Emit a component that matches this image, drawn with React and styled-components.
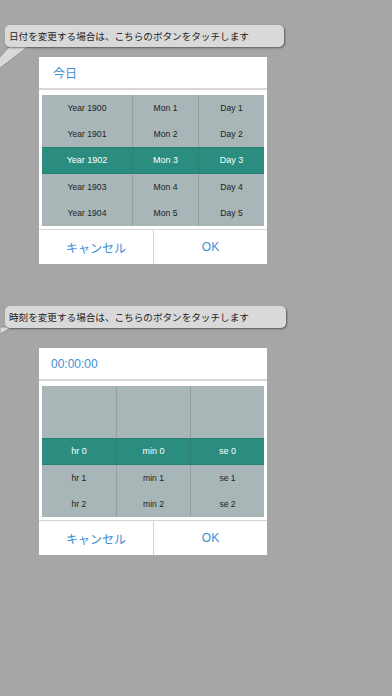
import React from "react";
import styled, { createGlobalStyle } from "styled-components";

const Global = createGlobalStyle`
  html, body { margin: 0; padding: 0; background: #a6a6a6; }
  body { font-family: "Liberation Sans", "Noto Sans CJK JP", sans-serif; }
`;

const Screen = styled.div`
  width: 392px;
  height: 696px;
  background: #a6a6a6;
  overflow: hidden;
  display: flex;
  flex-direction: column;
  align-items: flex-start;
  padding-top: 25px;
  box-sizing: border-box;
`;

const BubbleWrap = styled.div`
  position: relative;
  margin-left: 5px;
  margin-top: ${(p) => p.$top}px;
  width: ${(p) => p.$width}px;
`;

const Bubble = styled.div`
  position: relative;
  z-index: 1;
  height: 22px;
  background: #d9d9d9;
  border-radius: 5px;
  box-shadow: 1px 1px 2px rgba(0, 0, 0, 0.45);
  display: flex;
  align-items: center;
  padding-left: 4px;
  font-family: "Noto Sans CJK JP", sans-serif;
  font-size: 9.6px;
  color: #1e1e1e;
  white-space: nowrap;
`;

const Tail = styled.svg`
  position: absolute;
  left: -5px;
  top: 18px;
  z-index: 0;
  overflow: visible;
`;

const Dialog = styled.div`
  margin-left: 39px;
  margin-top: ${(p) => p.$top}px;
  width: 228px;
  background: #ffffff;
  display: flex;
  flex-direction: column;
`;

const Header = styled.div`
  height: 31px;
  border-bottom: 2px solid #d8d8d8;
  display: flex;
  align-items: center;
  padding-left: ${(p) => p.$pad}px;
  color: #3d8ed6;
  font-family: "Liberation Sans", "Noto Sans CJK JP", sans-serif;
  font-size: 12px;
`;

const Body = styled.div`
  padding: 5px 3px 3px 3px;
`;

const Picker = styled.div`
  display: grid;
  grid-template-columns: ${(p) => p.$cols};
  background: #a8b6b8;
  height: 131px;
`;

const Column = styled.div`
  display: flex;
  flex-direction: column;
`;

const Cell = styled.div`
  height: 26.2px;
  display: flex;
  align-items: center;
  justify-content: center;
  box-sizing: border-box;
  border-left: ${(p) => (p.$first ? "none" : "1px solid rgba(60, 80, 82, 0.22)")};
  background: ${(p) => (p.$selected ? "#2a8d7f" : "transparent")};
  color: ${(p) => (p.$selected ? "#ffffff" : "#222222")};
  font-size: ${(p) => (p.$selected ? "9px" : "8.6px")};
  font-family: "Liberation Sans", sans-serif;
  box-shadow: ${(p) =>
    p.$selected ? "inset 0 1px 0 rgba(0,0,0,0.08), inset 0 -1px 0 rgba(0,0,0,0.08)" : "none"};
`;

const Buttons = styled.div`
  display: grid;
  grid-template-columns: 114px 114px;
  border-top: 1px solid #d4d4d4;
  height: 34px;
`;

const Button = styled.div`
  display: flex;
  align-items: center;
  justify-content: center;
  color: #3d8ed6;
  font-size: 12px;
  font-family: "Liberation Sans", "Noto Sans CJK JP", sans-serif;
  border-left: ${(p) => (p.$divider ? "1px solid #d4d4d4" : "none")};
`;

function PickerDialog({ top, title, titlePad, cols, columns, selected }) {
  return (
    <Dialog $top={top}>
      <Header $pad={titlePad}>{title}</Header>
      <Body>
        <Picker $cols={cols}>
          {columns.map((col, ci) => (
            <Column key={ci}>
              {col.map((v, ri) => (
                <Cell key={ri} $first={ci === 0} $selected={ri === selected}>
                  {v}
                </Cell>
              ))}
            </Column>
          ))}
        </Picker>
      </Body>
      <Buttons>
        <Button>キャンセル</Button>
        <Button $divider>OK</Button>
      </Buttons>
    </Dialog>
  );
}

function Tip({ top, width, text, tail }) {
  return (
    <BubbleWrap $top={top} $width={width}>
      {tail === "long" ? (
        <Tail width="40" height="40">
          <polygon
            points="11,2 30,2 0,25 -1,25 -1,14 0,14"
            fill="#d9d9d9"
            stroke="#8e8e8e"
            strokeWidth="0.8"
          />
        </Tail>
      ) : (
        <Tail width="20" height="20">
          <polygon points="0,3 12,3 0,10" fill="#d9d9d9" stroke="#8e8e8e" strokeWidth="0.8" />
        </Tail>
      )}
      <Bubble>{text}</Bubble>
    </BubbleWrap>
  );
}

export default function App() {
  return (
    <>
      <Global />
      <Screen>
        <Tip top={0} width={279} tail="long" text="日付を変更する場合は、こちらのボタンをタッチします" />
        <PickerDialog
          top={10}
          title="今日"
          titlePad={14}
          cols="90px 66px 66px"
          selected={2}
          columns={[
            ["Year 1900", "Year 1901", "Year 1902", "Year 1903", "Year 1904"],
            ["Mon 1", "Mon 2", "Mon 3", "Mon 4", "Mon 5"],
            ["Day 1", "Day 2", "Day 3", "Day 4", "Day 5"],
          ]}
        />
        <Tip top={42} width={281} tail="short" text="時刻を変更する場合は、こちらのボタンをタッチします" />
        <PickerDialog
          top={20}
          title="00:00:00"
          titlePad={12}
          cols="74px 74px 74px"
          selected={2}
          columns={[
            ["", "", "hr 0", "hr 1", "hr 2"],
            ["", "", "min 0", "min 1", "min 2"],
            ["", "", "se 0", "se 1", "se 2"],
          ]}
        />
      </Screen>
    </>
  );
}
